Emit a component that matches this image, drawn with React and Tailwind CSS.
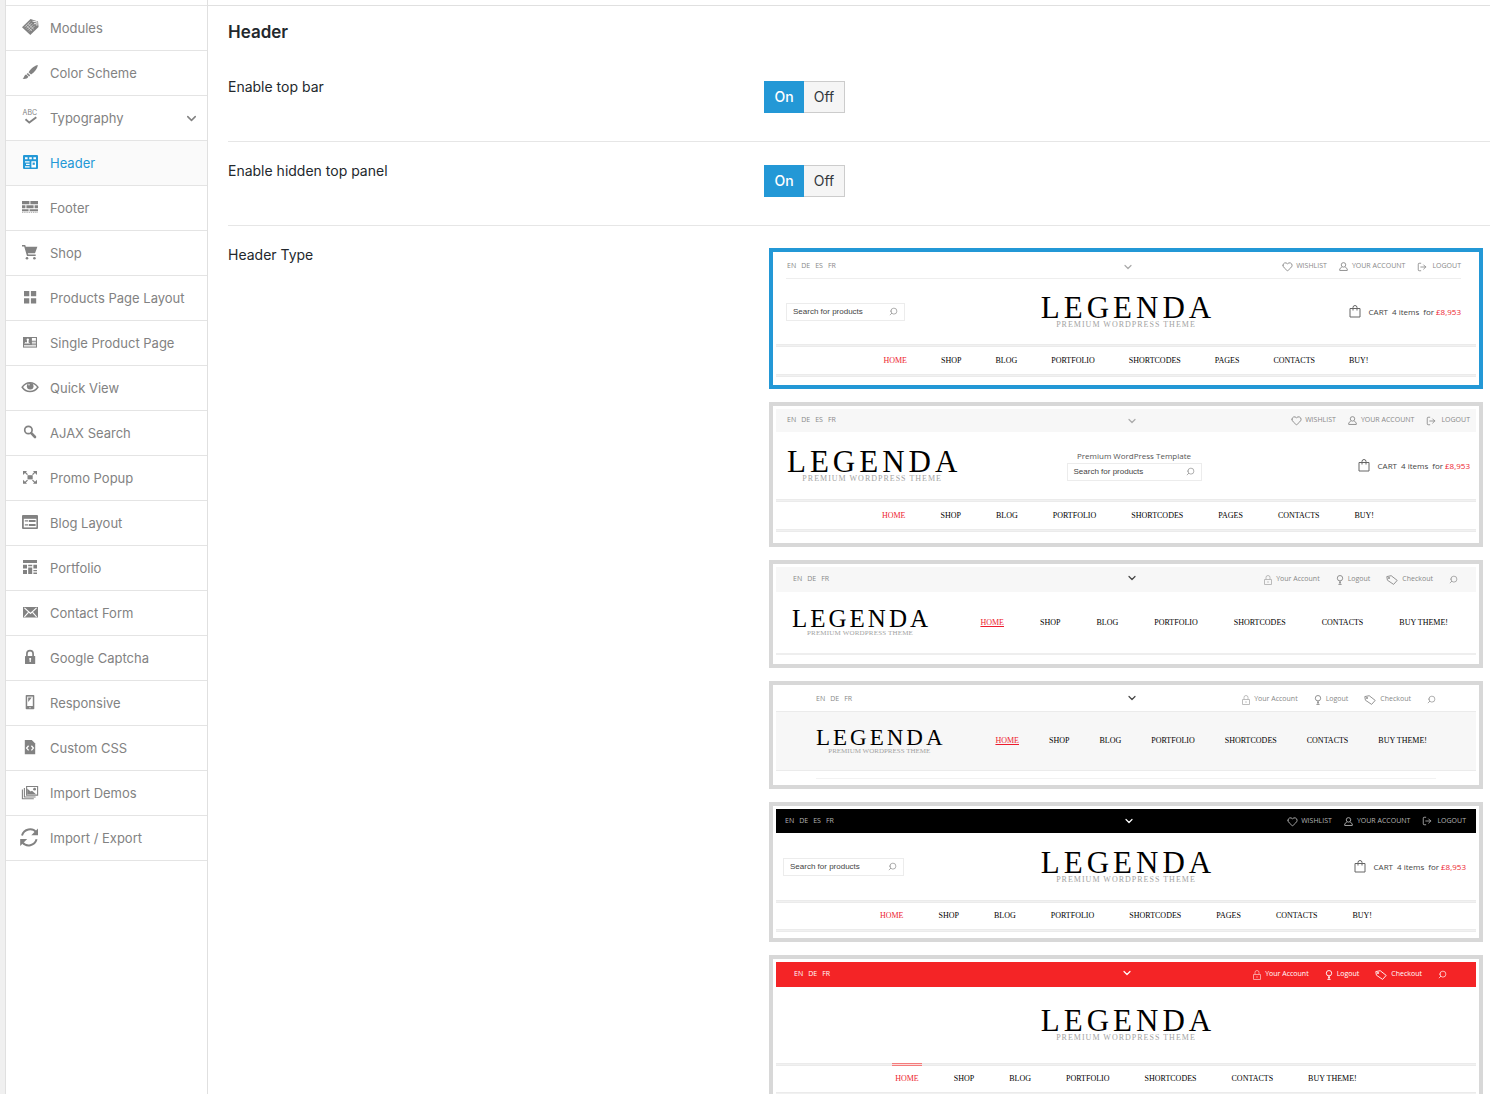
import { useState } from 'react';
import { ChevronDown, Heart, LogOut, Search } from 'lucide-react';

/* ---------- Sidebar icons, drawn on an 18x18 grid ---------- */

const ICONS = {
  modules: (
    <>
      <path d="M9.5 0 17 2.6 17.6 8 9.3 16 1 8.2Z" />
      <path d="M3.6 8.2 9.2 2.6M5.1 9.6 10.7 4M6.6 11 12.2 5.4M8.1 12.4 13.7 6.8M5.2 6.4l5.8 5.6M7 4.7l5.8 5.6" stroke="#fff" strokeWidth="0.5" fill="none" />
      <path d="M11.5 2.2 16 2.9 15.9 6.6" stroke="#fff" strokeWidth="0.9" fill="none" />
      <circle cx="14" cy="4.6" r="0.8" fill="#fff" />
    </>
  ),
  brush: (
    <>
      <path d="M16.8 1C14 1.3 10 4.3 7.6 8.2L10 10.6C13.8 8 16.6 4.2 16.8 1Z" />
      <path d="M6.8 9 9.2 11.3 8.1 12.4 5.7 10.1Z" />
      <path d="M5.2 10.6 7.4 12.7C6.5 14.6 4 15.2 1.6 14.8 3.2 14 2.9 11.2 5.2 10.6Z" />
    </>
  ),
  abc: (
    <>
      <text x="1.6" y="6" fontSize="7" fontFamily="Inter, sans-serif">ABC</text>
      <path d="M4.5 10.2 8.3 13.6 15.3 8.3" stroke="currentColor" strokeWidth="1.9" fill="none" />
    </>
  ),
  header: (
    <>
      <rect x="2" y="1" width="15" height="14" rx="1" />
      <path d="M4 3.2h2.6v2H4zM8.2 3.2h2.6v2H8.2zM12.4 3.2H15v2h-2.6zM4 7.2h4.6v1.2H4zM5 9.8h3.6V11H5zM4 12.2h4.6v1.2H4zM10.4 7.2H15v6.2h-4.6z" fill="#fff" />
      <path d="M11.6 8.6h2.2v2.2h-2.2z" />
    </>
  ),
  footer: (
    <>
      <path d="M1 2h7.4v3.2H1zM9.4 2H17v3.2H9.4zM1 6.2h3.4v3H1zM5.4 6.2h7.2v3H5.4zM13.6 6.2H17v3h-3.4zM1 10.2h6.6v2H1zM8.6 10.2H17v2H8.6z" />
      <path d="M1 13.3h16" stroke="currentColor" strokeWidth="0.7" strokeDasharray="1.4 0.8" />
    </>
  ),
  cart: (
    <>
      <path d="M1 1h3.2l.6 1.8H16.4L14 9.2H6.8l.5 1.4h7.4v1.5H6L3.2 2.5H1z" />
      <circle cx="6" cy="14.3" r="1.3" />
      <circle cx="13.4" cy="14.3" r="1.3" />
    </>
  ),
  grid: <path d="M3 2h5.3v5.3H3zM9.9 2h5.3v5.3H9.9zM3 9.2h5.3v5.3H3zM9.9 9.2h5.3v5.3H9.9z" />,
  single: (
    <>
      <rect x="2" y="3" width="14" height="10.6" />
      <path d="M10.9 4h4v2.7h-4zM10.9 7.7h4v1h-4zM3 10.9h12v.8H3zM10.9 9.4h4v.8h-4zM3 12.4h12v.5H3z" fill="#fff" />
      <path d="M3.2 9.6 4.6 8 6 8.4V6.6a1.2 1.2 0 1 1 1.6 0v1.8L9.4 9.6z" fill="#fff" />
    </>
  ),
  eye: (
    <>
      <path d="M1.2 8.2C3.4 5 6 3.7 9 3.7s5.700 1.300 7.900 4.500C14.700 11.300 12 12.500 9 12.500S3.400 11.300 1.200 8.200Z" fill="none" stroke="currentColor" strokeWidth="1.5" />
      <circle cx="9.2" cy="7.2" r="3.3" />
      <circle cx="8" cy="5.800" r="0.7" fill="#fff" />
    </>
  ),
  search: (
    <>
      <circle cx="7.4" cy="6" r="3.700" fill="none" stroke="currentColor" strokeWidth="1.700" />
      <path d="M10.300 9.200 14 13" stroke="currentColor" strokeWidth="2.600" strokeLinecap="round" />
    </>
  ),
  popup: (
    <>
      <rect x="6.500" y="6.200" width="5.200" height="4.200" />
      <path d="M2 2h4L4.900 3.200 7 5.200 6 6 4 4.100 2 6zM16 2h-4l1.100 1.200L11 5.200 12 6l2-1.900L16 6zM2 14.800h4l-1.100-1.200L7 11.600 6 10.800l-2 1.900-2-1.900zM16 14.800h-4l1.100-1.200L11 11.600l1-.8 2 1.900 2-1.900z" />
    </>
  ),
  blog: (
    <>
      <rect x="1" y="1" width="16" height="14" rx="1" />
      <path d="M2.800 4.800h12.600v8.600H2.800z" fill="#fff" />
      <path d="M3.800 6.300h3.200v1.300H3.800zM3.800 10.300h3.200v1.300H3.800zM7.800 5.900h6.800v2.200H7.800zM7.800 9.900h6.800v2.200H7.800z" />
    </>
  ),
  portfolio: (
    <path d="M2 1h14v3H2zM2 5.800h4v3.600H2zM7.200 5.800h4v1.400h-4zM12.400 5.800H16v3.600h-3.600zM2 11h4v4H2zM7.200 8.400h4V15h-4zM12.400 11H16v1.200h-3.600zM12.400 13.400H16V15h-3.600z" />
  ),
  mail: (
    <>
      <rect x="2" y="3" width="15" height="10.500" />
      <path d="m3.400 3.800 6.100 5.600 6.100-5.600M3.400 12.800l4-4.400M15.600 12.800l-4-4.400" stroke="#fff" strokeWidth="1.100" fill="none" />
    </>
  ),
  lock: (
    <>
      <path d="M5.900 7V4.800a3.100 3.100 0 0 1 6.200 0V7" fill="none" stroke="currentColor" strokeWidth="1.700" />
      <rect x="4" y="7" width="10.200" height="8" rx="0.500" />
      <path d="M8.300 9h1.800v1.800H9.800v2.200H8.600v-2.200h-.3z" fill="#fff" />
    </>
  ),
  phone: (
    <>
      <rect x="4.700" y="1" width="8.600" height="14.200" rx="0.800" />
      <path d="M6.200 2.600h5.600v9.400H6.200z" fill="#fff" />
      <path d="M7.200 3.600h3.600L7.200 8z" />
      <path d="M8.100 13h1.800v1.200H8.100z" fill="#fff" opacity="0.500" />
    </>
  ),
  code: (
    <>
      <path d="M3.800 1h7l3.400 3.400V15.200H3.800z" />
      <path d="M7.600 6.800 5.600 9.100l2 2.300M10.400 6.800l2 2.300-2 2.300" stroke="#fff" strokeWidth="1.300" fill="none" />
    </>
  ),
  images: (
    <>
      <path d="M5.600 2.500h11v8.600h-11zM3.400 4v9h11.200M1.400 5.500v9.200h11.400" fill="none" stroke="currentColor" strokeWidth="1.100" />
      <path d="M6.200 4.600 9.600 7.600 11 6.800 15 10.200H6.200z" />
      <circle cx="13.600" cy="5.200" r="1.400" />
    </>
  ),
  refresh: (
    <>
      <path d="M1 6.500C3-.500 11.500-1.600 15 3" fill="none" stroke="currentColor" strokeWidth="2" />
      <path d="M17-.500V6.300H10.300z" />
      <path d="M15.600 10.300C13.600 17 5.400 18.200 1.600 13.600" fill="none" stroke="currentColor" strokeWidth="2" />
      <path d="M-.800 17V10H6.200z" />
    </>
  ),
};

const MENU = [
  ['modules', 'Modules'],
  ['brush', 'Color Scheme'],
  ['abc', 'Typography'],
  ['header', 'Header'],
  ['footer', 'Footer'],
  ['cart', 'Shop'],
  ['grid', 'Products Page Layout'],
  ['single', 'Single Product Page'],
  ['eye', 'Quick View'],
  ['search', 'AJAX Search'],
  ['popup', 'Promo Popup'],
  ['blog', 'Blog Layout'],
  ['portfolio', 'Portfolio'],
  ['mail', 'Contact Form'],
  ['lock', 'Google Captcha'],
  ['phone', 'Responsive'],
  ['code', 'Custom CSS'],
  ['images', 'Import Demos'],
  ['refresh', 'Import / Export'],
];

function Sidebar() {
  return (
    <nav className="w-[203px] shrink-0 border-x border-[#e0e0e0] pt-[5px]">
      <ul className="border-t border-[#e4e4e4]">
        {MENU.map(([icon, name]) => {
          const active = name === 'Header';
          return (
            <li key={name} className={`border-b border-[#e4e4e4] ${active ? 'bg-[#fafafa] text-[#2398d6]' : 'text-[#828282]'}`}>
              <a href="#" aria-current={active ? 'page' : undefined} className="flex h-11 items-center pr-2 pl-[15px] text-[13px]">
                <svg viewBox="0 0 18 18" className="mr-[11px] h-[18px] w-[18px] shrink-0 overflow-visible" fill="currentColor" aria-hidden="true">
                  {ICONS[icon]}
                </svg>
                <span className="flex-1 pt-0.5 whitespace-nowrap">{name}</span>
                {icon === 'abc' && <ChevronDown size={15} strokeWidth={2.4} aria-hidden="true" />}
              </a>
            </li>
          );
        })}
      </ul>
    </nav>
  );
}

/* ---------- Small icons of the header previews ---------- */

function UserIcon() {
  return (
    <svg viewBox="0 0 10 10" className="h-[9px] w-[9px]" fill="none" stroke="currentColor" aria-hidden="true">
      <circle cx="5" cy="3.200" r="2.500" />
      <path d="M3 5.500.800 7.800v1.600h8.400V7.800L7 5.500" />
    </svg>
  );
}

function BagIcon() {
  return (
    <svg viewBox="0 0 12 13" className="mr-1 h-[13px] w-3 text-[#666]" fill="none" stroke="currentColor" aria-hidden="true">
      <path d="M1 3.500h10v8.500H1zM4 5.500V2.500A2 2 0 0 1 8 2.500v3" />
    </svg>
  );
}

function BulbIcon() {
  return (
    <svg viewBox="0 0 8 10" className="h-[10px] w-2" fill="none" stroke="currentColor" strokeWidth="0.900" aria-hidden="true">
      <circle cx="4" cy="3.200" r="2.700" />
      <path d="M4 6v3M2.400 9.400h3.200M3 7.300h2" />
    </svg>
  );
}

function PadlockIcon() {
  return (
    <svg viewBox="0 0 8 10" className="h-[10px] w-2 opacity-60" fill="none" stroke="currentColor" strokeWidth="0.900" aria-hidden="true">
      <path d="M.500 4.500h7v5h-7zM2 4.500V2.500a2 2 0 0 1 4 0v2M4 6.200v1.600" />
    </svg>
  );
}

function TagIcon() {
  return (
    <svg viewBox="0 0 12 10" className="h-[10px] w-3" fill="none" stroke="currentColor" strokeWidth="0.900" strokeLinejoin="round" aria-hidden="true">
      <path d="M.800 1.600 5.200.700 11.200 5.400 7.600 9.400 1.400 5.200Z" />
      <circle cx="3" cy="3" r="0.700" />
    </svg>
  );
}

const Magnifier = () => <Search size={9} strokeWidth={1.800} className="-scale-x-100" aria-hidden="true" />;

function ShopLinks({ className }) {
  return (
    <span className={`flex items-center justify-end gap-3 text-[7px] ${className}`}>
      <span className="flex items-center gap-[3px]"><Heart size={11} strokeWidth={2} aria-hidden="true" />WISHLIST</span>
      <span className="flex items-center gap-1"><UserIcon />YOUR ACCOUNT</span>
      <span className="flex items-center gap-[5px]"><LogOut size={10} strokeWidth={2} aria-hidden="true" />LOGOUT</span>
    </span>
  );
}

function AccountLinks({ className }) {
  return (
    <span className={`flex items-center justify-end gap-4 text-[7px] ${className}`}>
      <span className="flex items-center gap-1"><PadlockIcon />Your Account</span>
      <span className="flex items-center gap-1"><BulbIcon />Logout</span>
      <span className="flex items-center gap-1"><TagIcon />Checkout</span>
      <Magnifier />
    </span>
  );
}

function TopBar({ className, langs, langClass, chevronClass, children }) {
  return (
    <span className={`grid grid-cols-[1fr_auto_1fr] items-center ${className}`}>
      <span className={`flex gap-[5px] text-[7px] ${langClass}`}>
        {langs.map((l) => <span key={l}>{l}</span>)}
      </span>
      <span className={chevronClass}><ChevronDown size={12} strokeWidth={2.400} aria-hidden="true" /></span>
      {children}
    </span>
  );
}

const LOGO_SIZES = {
  large: ['text-[31px] leading-[26px] tracking-[4px] -mr-1', 'text-[8px] tracking-[1px]'],
  medium: ['text-[25px] leading-[21px] tracking-[3px] -mr-[3px]', 'text-[7px] tracking-wide'],
  small: ['text-[23px] leading-[19px] tracking-[3px] -mr-[3px]', 'text-[7px]'],
};

function Logo({ size = 'large' }) {
  const [name, tagline] = LOGO_SIZES[size];
  return (
    <span className="flex flex-col items-center font-['Liberation_Serif',serif] whitespace-nowrap">
      <span className={`text-black ${name}`}>LEGENDA</span>
      <span className={`leading-2 text-[#a3a3a3] ${tagline}`}>PREMIUM WORDPRESS THEME</span>
    </span>
  );
}

function SearchBox({ className }) {
  return (
    <span className={`flex h-[18px] items-center justify-between border border-[#ececec] px-[6px] font-['Liberation_Sans',sans-serif] text-[8px] text-[#444] ${className}`}>
      Search for products
      <span className="text-[#888]"><Magnifier /></span>
    </span>
  );
}

function Cart({ className }) {
  return (
    <span className={`flex items-center justify-end gap-1 text-[8px] text-[#444] ${className}`}>
      <BagIcon />
      <span>CART</span>
      <span>4 items</span>
      <span className="flex gap-[2px]">for <span className="text-[#ed1c2e]">£8,953</span></span>
    </span>
  );
}

const SHOP_MENU = ['HOME', 'SHOP', 'BLOG', 'PORTFOLIO', 'SHORTCODES', 'PAGES', 'CONTACTS', 'BUY!'];
const THEME_MENU = ['HOME', 'SHOP', 'BLOG', 'PORTFOLIO', 'SHORTCODES', 'CONTACTS', 'BUY THEME!'];

function Menu({ items, className, underline }) {
  return (
    <span className={`flex items-center font-['Liberation_Serif',serif] text-[8px] whitespace-nowrap text-black ${className}`}>
      {items.map((item, i) => (
        <span key={item} className={i ? '' : `text-[#ed1c2e] ${underline ? 'underline' : ''}`}>{item}</span>
      ))}
    </span>
  );
}

const Rule = () => <span className="block h-[3px] border-y border-[#ebebeb] bg-[#f1f1f1]" />;

const LANGS4 = ['EN', 'DE', 'ES', 'FR'];
const LANGS3 = ['EN', 'DE', 'FR'];

/* ---------- Header previews ---------- */

function ClassicPreview() {
  return (
    <>
      <TopBar className="mr-[15px] ml-[10px] h-6 border-b border-[#eee] text-[#888]" langs={LANGS4} langClass="pl-px" chevronClass="pl-2 text-[#aaa]">
        <ShopLinks className="" />
      </TopBar>
      <span className="grid h-[65px] grid-cols-[1fr_auto_1fr] items-center">
        <SearchBox className="ml-[10px] w-[119px]" />
        <Logo />
        <Cart className="pr-[15px]" />
      </span>
      <Rule />
      <Menu items={SHOP_MENU} className="h-[27px] justify-center gap-[34px]" />
      <Rule />
      <span className="block h-[5px]" />
    </>
  );
}

function LeftLogoPreview() {
  return (
    <>
      <TopBar className="h-[23px] bg-[#f7f7f7] text-[#888]" langs={LANGS4} langClass="pl-[11px]" chevronClass="pl-3 text-[#aaa]">
        <ShopLinks className="pr-[6px]" />
      </TopBar>
      <span className="grid h-[67px] grid-cols-[1fr_auto_1fr] items-center">
        <span className="flex pl-[11px]"><Logo /></span>
        <span className="flex flex-col items-center pb-0.5 pl-4 text-[8px] leading-[14px] text-[#555]">
          Premium WordPress Template
          <SearchBox className="w-[135px]" />
        </span>
        <Cart className="pr-[6px]" />
      </span>
      <Rule />
      <Menu items={SHOP_MENU} className="h-[27px] justify-center gap-[35px] pl-1" />
      <Rule />
      <span className="block h-2" />
    </>
  );
}

function InlinePreview() {
  return (
    <>
      <TopBar className="h-[25px] bg-[#f7f7f7] text-[#888]" langs={LANGS3} langClass="pl-[17px]" chevronClass="pb-1 pl-3 text-[#444]">
        <AccountLinks className="pr-[18px]" />
      </TopBar>
      <span className="flex h-[61px] items-center justify-between pr-7 pl-4">
        <Logo size="medium" />
        <Menu items={THEME_MENU} underline className="gap-9" />
      </span>
      <span className="block h-[2px] bg-[#eee]" />
      <span className="block h-[6px]" />
    </>
  );
}

function BandPreview() {
  return (
    <>
      <TopBar className="h-[23px] text-[#888]" langs={LANGS3} langClass="pl-10" chevronClass="pb-1 pl-3 text-[#444]">
        <AccountLinks className="pr-10" />
      </TopBar>
      <span className="flex h-[60px] items-center justify-between border-y border-[#ebebeb] bg-[#f7f7f7] pr-[49px] pl-10">
        <Logo size="small" />
        <Menu items={THEME_MENU} underline className="gap-[30px]" />
      </span>
      <span className="mx-10 mt-[7px] mb-[3px] block h-px bg-[#f2f2f2]" />
    </>
  );
}

function DarkPreview() {
  return (
    <>
      <TopBar className="h-6 bg-black text-[#b5b5b5]" langs={LANGS4} langClass="pl-[9px]" chevronClass="pl-[6px] text-white">
        <ShopLinks className="pr-[10px]" />
      </TopBar>
      <span className="grid h-[67px] grid-cols-[1fr_auto_1fr] items-center">
        <SearchBox className="ml-[7px] w-[121px]" />
        <Logo />
        <Cart className="pr-[10px]" />
      </span>
      <Rule />
      <Menu items={SHOP_MENU} className="h-[26px] justify-center gap-[35px]" />
      <Rule />
      <span className="block h-[3px]" />
    </>
  );
}

function RedPreview() {
  return (
    <>
      <TopBar className="h-[25px] bg-[#f42426] text-white" langs={LANGS3} langClass="pl-[18px]" chevronClass="pb-1 pl-[2px]">
        <AccountLinks className="pr-[29px]" />
      </TopBar>
      <span className="flex h-[76px] items-center justify-center"><Logo /></span>
      <Rule />
      <span className="flex h-[26px] justify-center gap-[35px] font-['Liberation_Serif',serif] text-[8px] leading-[26px] whitespace-nowrap text-black">
        {THEME_MENU.map((item, i) => (
          <span key={item} className={i ? '' : 'relative text-[#ed1c2e]'}>
            {!i && <span className="absolute -inset-x-[3px] -top-[3px] h-[3px] border-y border-[#f47c7c] bg-[#fbdcdc]" />}
            {item}
          </span>
        ))}
      </span>
      <Rule />
      <span className="block h-[5px]" />
    </>
  );
}

const PREVIEWS = [
  ['Classic', ClassicPreview],
  ['Left logo', LeftLogoPreview],
  ['Inline menu', InlinePreview],
  ['Menu band', BandPreview],
  ['Dark top bar', DarkPreview],
  ['Red top bar', RedPreview],
];

/* ---------- Settings ---------- */

function OnOff({ label }) {
  const [on, setOn] = useState(true);
  const chosen = 'bg-[#2398d6] border-[#2398d6] text-white font-medium';
  const other = 'bg-[#f5f5f5] border-[#ccc] text-[#32373c]';
  return (
    <div role="group" aria-label={label} className="flex h-8 text-sm">
      <button type="button" aria-pressed={on} onClick={() => setOn(true)} className={`w-10 border ${on ? chosen : other}`}>On</button>
      <button type="button" aria-pressed={!on} onClick={() => setOn(false)} className={`w-[41px] border border-l-0 ${on ? other : chosen}`}>Off</button>
    </div>
  );
}

function Row({ label, children, last }) {
  return (
    <section className={`grid grid-cols-[536px_minmax(0,1fr)] ${last ? 'pt-[22px] pb-4' : 'h-[84px] border-b border-[#e6e6e6] pt-[23px]'}`}>
      <h3 className={`text-sm leading-3 text-[#23282d] ${last ? 'pt-px' : ''}`}>{label}</h3>
      {children}
    </section>
  );
}

export default function App() {
  const [type, setType] = useState('Classic');
  return (
    <div className="flex h-screen overflow-hidden bg-white font-[Inter,sans-serif]">
      <div className="w-[5px] shrink-0 bg-[#f0f0f0]" />
      <Sidebar />
      <div className="min-w-0 flex-1 overflow-y-auto pt-[5px] [scrollbar-width:none]">
        <main className="border-t border-[#e0e0e0] pl-5">
          <h2 className="h-[52px] text-[17px] leading-[52px] font-semibold text-[#23282d]">Header</h2>
          <Row label="Enable top bar"><OnOff label="Enable top bar" /></Row>
          <Row label="Enable hidden top panel"><OnOff label="Enable hidden top panel" /></Row>
          <Row label="Header Type" last>
            <div role="radiogroup" aria-label="Header Type" className="flex flex-col gap-[13px] pr-[7px] pl-[5px]">
              {PREVIEWS.map(([name, Preview]) => (
                <label key={name} className="relative block cursor-pointer border-4 border-[#d8d8d8] p-[3px] font-['Open_Sans',sans-serif] has-checked:border-[#2398d6]">
                  <input type="radio" name="header-type" aria-label={name} checked={type === name} onChange={() => setType(name)} className="sr-only" />
                  <Preview />
                </label>
              ))}
            </div>
          </Row>
        </main>
      </div>
    </div>
  );
}
